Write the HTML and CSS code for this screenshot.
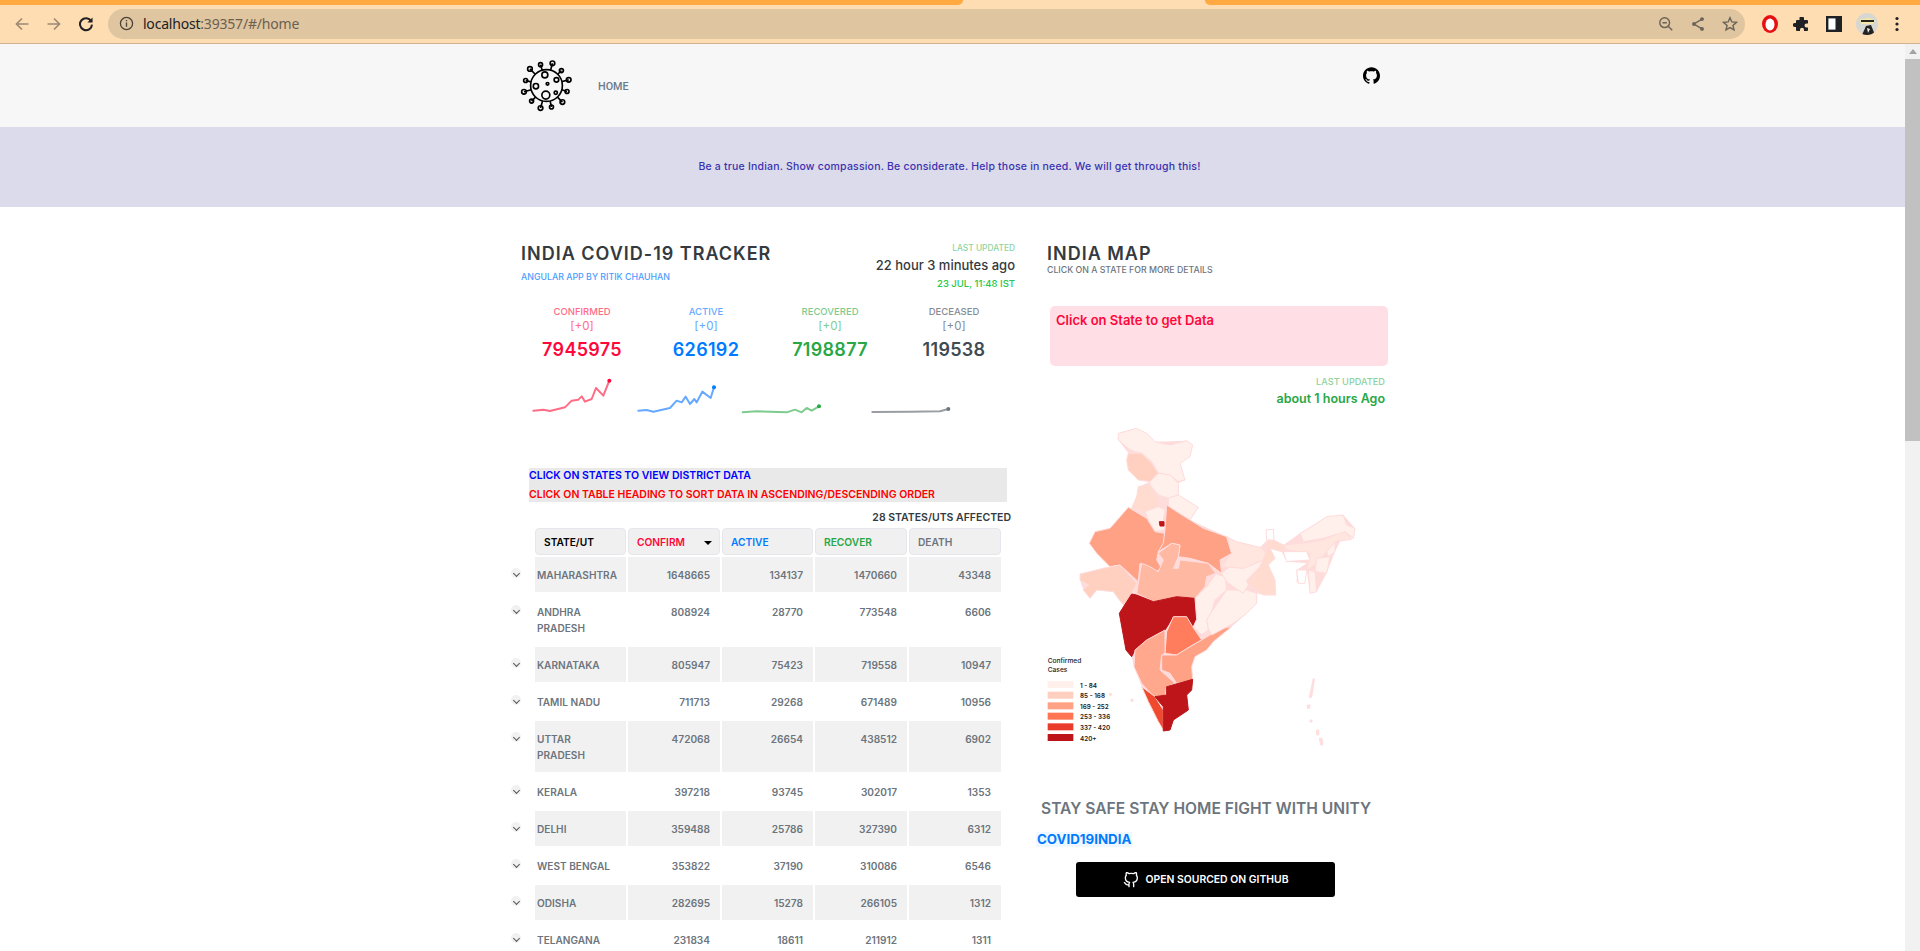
FILE: index.html
```html
<!DOCTYPE html>
<html lang="en">
<head>
<meta charset="utf-8">
<title>India COVID-19 Tracker</title>
<link rel="stylesheet" href="styles.css">
</head>
<body>
<div class="tabstrip"><span class="tab-seg tab-left"></span><span class="tab-gap"></span><span class="tab-seg tab-right"></span></div>
<header class="toolbar">
  <svg class="tb-icon dim" viewBox="0 0 16 16"><path d="M14.500 8H2.500M8 2.500 2.500 8 8 13.500"/></svg>
  <svg class="tb-icon dim" viewBox="0 0 16 16"><path d="M1.500 8h12M8 2.500 13.500 8 8 13.500"/></svg>
  <svg class="tb-icon dark" viewBox="0 0 16 16"><path d="M13.200 5.200A6 6 0 1 0 14 8.600"/><path class="solid" d="M14.600 1.400v5.200H9.400z"/></svg>
  <div class="omnibox">
    <svg class="om-info" viewBox="0 0 16 16"><circle cx="8" cy="8" r="6.500"/><path d="M8 7v4.500M8 4.300v1.400"/></svg>
    <span class="url"><span class="url-host">localhost</span>:39357/#/home</span>
    <svg class="om-icon" viewBox="0 0 18 18"><circle cx="7.500" cy="7.500" r="5.500"/><path d="M5 7.500h5M11.500 11.500 16 16"/></svg>
    <svg class="om-icon" viewBox="0 0 18 18"><path d="M13.500 3.500 4.500 9l9 5.500"/><circle class="solid" cx="13.500" cy="3.500" r="2.200"/><circle class="solid" cx="4.500" cy="9" r="2.200"/><circle class="solid" cx="13.500" cy="14.500" r="2.200"/></svg>
    <svg class="om-icon" viewBox="0 0 18 18"><path d="m9 2 2.100 4.700 5.100.5-3.900 3.400 1.200 5L9 13l-4.500 2.600 1.200-5-3.900-3.400 5.100-.5z"/></svg>
  </div>
  <div class="ext-group">
    <svg class="ext" viewBox="0 0 18 18"><ellipse cx="9" cy="9" rx="8" ry="9" fill="#e60f12"/><ellipse cx="9" cy="9.500" rx="4.500" ry="6" fill="#fff"/></svg>
    <svg class="ext" viewBox="0 0 18 18"><path fill="#202124" d="M7 2h3a1 1 0 0 1 1 1v2h3a1 1 0 0 1 1 1v2.500h-1.500a2 2 0 0 0 0 4H15V15a1 1 0 0 1-1 1h-3v-1.300a2 2 0 0 0-4 0V16H4a1 1 0 0 1-1-1v-3H1.800a2 2 0 0 1 0-4H3V6a1 1 0 0 1 1-1h2.500V3A1 1 0 0 1 7 2z"/></svg>
    <svg class="ext" viewBox="0 0 18 18"><rect x="2.200" y="2.200" width="13.600" height="13.600" fill="#fff" stroke="#202124" stroke-width="2.400"/><rect x="10.500" y="2" width="5.500" height="14" fill="#202124"/></svg>
    <svg class="avatar" viewBox="0 0 22 22"><defs><clipPath id="av"><circle cx="11" cy="11" r="11"/></clipPath></defs><g clip-path="url(#av)"><rect width="22" height="22" fill="#d6d6d2"/><path d="M4 6 14 5l5 3-2 3H5z" fill="#f2e6a8"/><rect x="5" y="7" width="13" height="2" fill="#26241f"/><path d="M6 22 10 13l5-1 4 10z" fill="#222"/><path d="m11 15 3 1-2 4z" fill="#eee"/></g></svg>
    <svg class="ext" viewBox="0 0 18 18"><circle cx="9" cy="3.500" r="1.600" fill="#202124"/><circle cx="9" cy="9" r="1.600" fill="#202124"/><circle cx="9" cy="14.500" r="1.600" fill="#202124"/></svg>
  </div>
</header>

<div class="viewport">
  <div class="page">
    <nav class="navbar">
      <div class="nav-inner">
        <svg class="logo" viewBox="30 25 160 160">
          <circle cx="110" cy="105" r="48"/>
          <path d="M76 71 60 55M97 59 92 42M122.500 58 128 38M144 71 155 60M157 93 177 88M156 118 172 123M143 140 158 155M121 152 125 170M98 151.500 92 173M77 140 65 152M64 118 42 124M63 94 47 90"/>
          <g class="logo-tips">
            <circle cx="60" cy="55" r="7"/><circle cx="92" cy="42" r="6"/><circle cx="128" cy="38" r="7"/><circle cx="155" cy="60" r="6"/><circle cx="177" cy="88" r="7"/><circle cx="172" cy="123" r="6"/><circle cx="158" cy="155" r="7"/><circle cx="125" cy="170" r="6"/><circle cx="92" cy="173" r="7"/><circle cx="65" cy="152" r="6"/><circle cx="42" cy="124" r="7"/><circle cx="47" cy="90" r="6"/>
            <circle cx="105" cy="73" r="9"/><circle cx="140" cy="88" r="7"/><circle cx="78" cy="107" r="8"/><circle cx="113" cy="100" r="4"/><circle cx="138" cy="127" r="5"/><circle cx="108" cy="134" r="12"/>
          </g>
        </svg>
        <a class="nav-link">HOME</a>
        <svg class="nav-gh" viewBox="0 0 24 24"><path d="M12 .297c-6.630 0-12 5.373-12 12 0 5.303 3.438 9.800 8.205 11.385.6.113.82-.258.82-.577 0-.285-.01-1.040-.015-2.040-3.338.724-4.042-1.610-4.042-1.610C4.422 18.070 3.633 17.700 3.633 17.700c-1.087-.744.084-.729.084-.729 1.205.084 1.838 1.236 1.838 1.236 1.070 1.835 2.809 1.305 3.495.998.108-.776.417-1.305.76-1.605-2.665-.3-5.466-1.332-5.466-5.930 0-1.310.465-2.380 1.235-3.220-.135-.303-.54-1.523.105-3.176 0 0 1.005-.322 3.300 1.230.96-.267 1.980-.399 3-.405 1.020.006 2.040.138 3 .405 2.280-1.552 3.285-1.230 3.285-1.230.645 1.653.24 2.873.12 3.176.765.84 1.230 1.910 1.230 3.220 0 4.610-2.805 5.625-5.475 5.920.42.36.81 1.096.81 2.220 0 1.606-.015 2.896-.015 3.286 0 .315.21.69.825.57C20.565 22.092 24 17.592 24 12.297c0-6.627-5.373-12-12-12"/></svg>
      </div>
    </nav>
    <div class="banner">Be a true Indian. Show compassion. Be considerate. Help those in need. We will get through this!</div>

    <main class="columns">
      <section class="left">
        <div class="head-row">
          <div>
            <h1 class="title">INDIA COVID-19 TRACKER</h1>
            <div class="byline">ANGULAR APP BY RITIK CHAUHAN</div>
          </div>
          <div class="updated">
            <div class="upd-label upd-small">LAST UPDATED</div>
            <div class="upd-ago">22 hour 3 minutes ago</div>
            <div class="upd-date">23 JUL, 11:48 IST</div>
          </div>
        </div>

        <div class="stats">
          <div class="stat confirmed"><div class="stat-label">CONFIRMED</div><div class="stat-delta">[+0]</div><div class="stat-num">7945975</div></div>
          <div class="stat active"><div class="stat-label">ACTIVE</div><div class="stat-delta">[+0]</div><div class="stat-num">626192</div></div>
          <div class="stat recovered"><div class="stat-label">RECOVERED</div><div class="stat-delta">[+0]</div><div class="stat-num">7198877</div></div>
          <div class="stat deceased"><div class="stat-label">DECEASED</div><div class="stat-delta">[+0]</div><div class="stat-num">119538</div></div>
        </div>

        <svg class="sparks" viewBox="0 450 1530 135">
          <polyline class="sp-red" points="70,560 100,557 120,561 165,550 185,530 205,527 215,517 225,533 245,525 258,492 280,515 298,470"/><circle class="dot-red" cx="298" cy="470" r="6"/>
          <polyline class="sp-blue" points="385,560 410,558 430,563 480,552 500,530 515,535 527,518 540,540 553,525 560,535 577,503 602,522 612,490"/><circle class="dot-blue" cx="612" cy="490" r="6"/>
          <polyline class="sp-green" points="698,565 740,562 830,565 855,557 875,565 890,552 905,560 927,547"/><circle class="dot-green" cx="927" cy="547" r="6"/>
          <polyline class="sp-grey" points="1087,564 1200,563 1290,562 1315,555"/><circle class="dot-grey" cx="1315" cy="555" r="6"/>
        </svg>

        <div class="notice">
          <div class="notice-blue">CLICK ON STATES TO VIEW DISTRICT DATA</div>
          <div class="notice-red">CLICK ON TABLE HEADING TO SORT DATA IN ASCENDING/DESCENDING ORDER</div>
        </div>
        <div class="affected">28 STATES/UTS AFFECTED</div>

        <table class="tbl">
          <colgroup><col class="c0"><col class="c1"><col class="c2"><col class="c3"><col class="c4"><col class="c5"></colgroup>
          <thead>
            <tr><th class="blank"></th><th class="h-state">STATE/UT</th><th class="h-conf">CONFIRM<span class="sort"></span></th><th class="h-act">ACTIVE</th><th class="h-rec">RECOVER</th><th class="h-dec">DEATH</th></tr>
          </thead>
          <tbody>
            <tr><td class="ch"><span class="chev"></span></td><td>MAHARASHTRA</td><td>1648665</td><td>134137</td><td>1470660</td><td>43348</td></tr>
            <tr><td class="ch"><span class="chev"></span></td><td>ANDHRA PRADESH</td><td>808924</td><td>28770</td><td>773548</td><td>6606</td></tr>
            <tr><td class="ch"><span class="chev"></span></td><td>KARNATAKA</td><td>805947</td><td>75423</td><td>719558</td><td>10947</td></tr>
            <tr><td class="ch"><span class="chev"></span></td><td>TAMIL NADU</td><td>711713</td><td>29268</td><td>671489</td><td>10956</td></tr>
            <tr><td class="ch"><span class="chev"></span></td><td>UTTAR PRADESH</td><td>472068</td><td>26654</td><td>438512</td><td>6902</td></tr>
            <tr><td class="ch"><span class="chev"></span></td><td>KERALA</td><td>397218</td><td>93745</td><td>302017</td><td>1353</td></tr>
            <tr><td class="ch"><span class="chev"></span></td><td>DELHI</td><td>359488</td><td>25786</td><td>327390</td><td>6312</td></tr>
            <tr><td class="ch"><span class="chev"></span></td><td>WEST BENGAL</td><td>353822</td><td>37190</td><td>310086</td><td>6546</td></tr>
            <tr><td class="ch"><span class="chev"></span></td><td>ODISHA</td><td>282695</td><td>15278</td><td>266105</td><td>1312</td></tr>
            <tr><td class="ch"><span class="chev"></span></td><td>TELANGANA</td><td>231834</td><td>18611</td><td>211912</td><td>1311</td></tr>
          </tbody>
        </table>
      </section>

      <section class="right">
        <h2 class="title">INDIA MAP</h2>
        <div class="map-sub">CLICK ON A STATE FOR MORE DETAILS</div>
        <div class="state-box">Click on State to get Data</div>
        <div class="map-updated">
          <div class="upd-label">LAST UPDATED</div>
          <div class="map-ago">about 1 hours Ago</div>
        </div>
        <svg class="map" viewBox="0 0 1080 990">
          <polygon class="silhouette" points="265,40 320,25 375,65 470,62 488,75 450,130 465,180 445,190 445,225 505,262 480,300 590,350 620,365 690,382 712,360 708,330 730,328 732,360 760,375 810,340 890,290 940,285 975,325 970,355 940,345 915,395 890,460 860,515 840,520 830,450 800,490 800,450 830,430 770,425 755,395 720,385 735,415 715,435 737,525 700,525 680,520 680,550 650,580 605,620 550,665 495,710 485,740 488,780 470,825 475,870 430,900 420,930 400,933 385,905 355,845 335,800 312,740 305,710 288,690 268,580 298,575 268,540 250,515 200,510 180,535 160,510 150,480 150,462 220,445 240,440 200,400 178,370 195,335 240,325 295,262 305,265 320,230 325,200 360,185 295,150 290,120 295,100 265,60"/>
          <g class="states">
            <polygon class="s1" points="265,40 320,25 350,40 375,65 420,75 470,62 488,75 480,110 450,130 465,180 445,185 420,165 385,160 365,125 335,100 300,90 265,60"/>
            <polygon class="s2" points="295,100 335,100 365,130 385,160 360,185 325,180 295,150 290,120"/>
            <polygon class="s1" points="360,185 385,160 420,165 445,190 445,225 415,235 385,225 360,195"/>
            <polygon class="s2b" points="325,200 360,195 385,235 385,260 345,275 305,265 320,230"/>
            <polygon class="s1" points="345,275 385,260 405,270 400,300 405,330 375,335 355,300"/>
            <polygon class="s1" points="415,235 445,225 505,262 480,300 440,275 415,260"/>
            <polygon class="s3" points="295,262 350,295 375,335 405,340 400,370 385,395 380,420 395,445 370,460 330,430 325,485 270,435 240,440 200,400 178,370 195,335 240,325"/>
            <polygon class="s3" points="410,255 440,275 480,300 520,325 590,350 605,400 570,420 575,460 535,430 480,415 445,410 450,375 425,370 385,395 400,370 405,330"/>
            <polygon class="s3b" points="325,490 335,430 360,440 385,455 400,420 385,400 425,370 450,375 445,410 430,445 445,445 450,420 535,430 557,460 530,470 525,500 495,535 440,530 370,545 320,520"/>
            <polygon class="s2" points="150,462 220,445 270,435 320,490 300,530 298,575 268,540 250,515 200,510 180,535 160,510 175,495 150,480"/>
            <polygon class="s6" points="388,305 402,305 402,318 390,318"/>
            <polygon class="s6" points="305,522 320,525 370,545 440,530 495,535 500,598 488,620 470,590 430,590 405,630 350,660 315,690 305,710 288,690 268,580"/>
            <polygon class="s4" points="430,590 470,590 488,620 515,660 480,680 440,705 405,700 410,635"/>
            <polygon class="s3" points="605,620 550,665 530,690 495,710 485,740 488,780 440,790 420,760 395,750 395,705 440,705 480,680 515,660 540,645 575,625"/>
            <polygon class="s3c" points="350,660 405,630 405,700 395,705 390,750 435,790 410,800 405,830 375,835 335,790 312,740 315,690"/>
            <polygon class="s5" points="335,800 375,830 400,870 400,930 385,905 355,845"/>
            <polygon class="s6" points="488,778 485,810 470,825 475,870 430,900 420,930 400,933 400,860 375,830 410,825 410,800"/>
            <polygon class="s1" points="558,462 585,470 590,510 555,540 545,575 530,600 535,630 515,645 490,620 500,598 495,535 530,500"/>
            <polygon class="s1" points="545,575 590,510 620,510 650,510 680,520 680,550 650,580 610,610 545,645 535,625 530,600"/>
            <polygon class="s1" points="575,460 600,440 640,445 700,420 690,440 650,480 655,495 640,520 610,500 590,485"/>
            <polygon class="s1b" points="590,350 620,365 690,382 710,400 700,420 640,445 575,440 605,400"/>
            <polygon class="s2b" points="712,360 730,360 760,375 755,395 720,385 735,415 715,435 735,480 737,525 700,525 650,485 690,440 705,405"/>
            <polygon class="s0" points="708,330 730,328 732,360 710,360"/>
            <polygon class="s1b" points="760,375 830,368 880,360 940,332 965,358 915,365 890,395 860,430 830,450 838,420 840,400 770,390"/>
            <polygon class="s1" points="810,340 860,310 890,290 940,285 950,315 975,325 970,355 945,335 880,355 820,365"/>
            <polygon class="s0" points="760,395 830,395 840,420 770,425"/>
            <polygon class="s1" points="860,415 900,410 890,460 855,455"/>
            <polygon class="s1" points="835,450 855,455 860,515 840,520"/>
            <polygon class="s0" points="800,450 830,450 825,490 805,490"/>
            <polygon class="s1" points="890,395 915,365 915,395 895,410"/>
            <polygon class="isl" points="850,775 853,778 845,832 838,832"/>
            <polygon class="isl" points="832,855 840,855 838,865 832,865"/>
            <polygon class="isl" points="840,900 846,900 846,906 840,906"/>
            <polygon class="isl" points="860,930 866,930 866,945 860,945"/>
            <polygon class="isl" points="868,955 876,955 878,975 872,975"/>
            <polygon class="isl" points="238,820 244,820 244,826 238,826"/>
            <polygon class="isl" points="303,838 309,838 309,844 303,844"/>
          </g>
          <text class="lg-title" x="53" y="728">Confirmed</text>
          <text class="lg-title" x="53" y="755">Cases</text>
          <rect class="l1" x="53" y="783" width="77" height="21"/><text class="lg-text" x="150" y="803">1 - 84</text>
          <rect class="l2" x="53" y="815" width="77" height="21"/><text class="lg-text" x="150" y="835">85 - 168</text>
          <rect class="l3" x="53" y="847" width="77" height="21"/><text class="lg-text" x="150" y="866">169 - 252</text>
          <rect class="l4" x="53" y="878" width="77" height="21"/><text class="lg-text" x="150" y="898">253 - 336</text>
          <rect class="l5" x="53" y="910" width="77" height="21"/><text class="lg-text" x="150" y="929">337 - 420</text>
          <rect class="l6" x="53" y="942" width="77" height="21"/><text class="lg-text" x="150" y="962">420+</text>
        </svg>
        <div class="stay">STAY SAFE STAY HOME FIGHT WITH UNITY</div>
        <div class="brand">COVID19INDIA</div>
        <a class="gh-btn">
          <svg class="gh-btn-icon" viewBox="0 0 24 24"><path d="M9 19c-5 1.500-5-2.500-7-3m14 6v-3.870a3.370 3.370 0 0 0-.94-2.610c3.140-.35 6.440-1.540 6.440-7A5.440 5.440 0 0 0 20 4.770 5.070 5.070 0 0 0 19.910 1S18.730.65 16 2.480a13.380 13.380 0 0 0-7 0C6.270.65 5.090 1 5.090 1A5.070 5.070 0 0 0 5 4.770a5.440 5.440 0 0 0-1.500 3.750c0 5.420 3.300 6.610 6.440 7A3.370 3.370 0 0 0 9 18.130V22"/></svg>
          <span>OPEN SOURCED ON GITHUB</span>
        </a>
      </section>
    </main>
  </div>
  <div class="scrollbar">
    <span class="sb-arrow"></span>
    <span class="sb-thumb"></span>
  </div>
</div>
</body>
</html>
```

FILE: styles.css
```css
* { box-sizing: border-box; }
html, body { margin: 0; height: 951px; overflow: hidden; }
body { font-family: Inter, "Liberation Sans", sans-serif; background: #fff; color: #343a40; }

/* browser chrome */
.tabstrip { display: flex; height: 5px; background: #ffddb3; }
.tab-seg { display: block; background: #ffa940; }
.tab-left { width: 963px; border-bottom-right-radius: 5px; }
.tab-gap { flex: 1; }
.tab-right { width: 715px; border-bottom-left-radius: 5px; }
.toolbar { display: flex; align-items: center; height: 39px; background: #ffddb3; border-bottom: 1px solid #d1b38f; padding: 0 0 1px 14px; }
.tb-icon { width: 16px; height: 16px; margin-right: 16px; fill: none; stroke-width: 1.700; }
.dim { stroke: #9c8a74; }
.dark { stroke: #202124; stroke-width: 2; }
.tb-icon .solid { fill: #202124; stroke: none; }
.omnibox { display: flex; align-items: center; width: 1639px; height: 30px; margin-left: -2px; background: #dfc5a0; border-radius: 15px; padding: 0 7px 0 11px; }
.om-info { width: 15px; height: 15px; fill: none; stroke: #4a4238; stroke-width: 1.400; margin-right: 9px; }
.url { flex: 1; font: 14px/1 "Noto Sans", sans-serif; letter-spacing: -.2px; color: #6b5f4f; }
.url-host { color: #202124; }
.om-icon { width: 16px; height: 16px; margin-left: 16px; fill: none; stroke: #6b6358; stroke-width: 1.600; }
.om-icon .solid { fill: #6b6358; stroke: none; }
.ext-group { display: flex; align-items: center; padding-left: 16px; }
.ext { width: 18px; height: 18px; margin-right: 14px; }
.avatar { width: 22px; height: 22px; margin-right: 10px; margin-left: -1px; }

/* page frame */
.viewport { display: flex; height: 907px; overflow: hidden; }
.page { flex: 1; min-width: 0; }
.scrollbar { width: 15px; background: #f1f1f1; display: flex; flex-direction: column; align-items: center; padding-top: 5px; }
.sb-arrow { width: 0; height: 0; border-left: 4px solid transparent; border-right: 4px solid transparent; border-bottom: 5px solid #a3a3a3; }
.sb-thumb { width: 15px; height: 382px; margin-top: 5px; background: #c1c1c1; }

.navbar { height: 83px; background: #f7f7f7; }
.nav-inner { position: relative; display: flex; align-items: flex-start; height: 100%; padding-left: 520px; }
.logo { width: 53px; height: 53px; margin-top: 15px; fill: none; stroke: #000; stroke-width: 5; }
.nav-link { margin: 36px 0 0 25px; font: 500 10.800px/13px Roboto, sans-serif; color: #6c7b8d; }
.nav-gh { position: absolute; left: 1363px; top: 23px; width: 17px; height: 17px; fill: #000; }
.banner { height: 80px; background: #dcdbeb; display: flex; align-items: center; justify-content: center; padding: 0 6px 1px 0; margin: 0; font-size: 10.500px; letter-spacing: .2px; font-weight: 500; color: #3a33b0; }

.columns { display: flex; padding-left: 506px; }
.left { width: 524px; padding-top: 35px; }
.right { width: 370px; padding: 35px 0 0 17px; position: relative; }

.title { margin: 0; font-size: 18px; line-height: 24px; font-weight: 600; letter-spacing: 1px; color: #343a40; }
.head-row { display: flex; justify-content: space-between; padding: 0 15px 0 15px; height: 63px; }
.byline { margin-top: 5px; font-size: 8.800px; line-height: 12px; font-weight: 500; color: #4c9dff; }
.updated { text-align: right; margin-top: 0; }
.upd-label { font-size: 9.200px; line-height: 13px; font-weight: 500; color: #8ed39e; }
.upd-small { font-size: 8.400px; }
.upd-ago { margin-top: 2px; font-size: 13px; line-height: 16px; font-weight: 500; color: #343a40; }
.upd-date { margin-top: 5px; font-size: 9.500px; line-height: 12px; font-weight: 500; color: #28c745; }

.stats { display: flex; padding-left: 14px; margin-top: 0; }
.stat { width: 124px; text-align: center; }
.stat-label { font-size: 9.500px; line-height: 13px; font-weight: 500; }
.stat-delta { font-size: 11.500px; line-height: 16px; font-weight: 400; }
.stat-num { margin-top: 4px; font-size: 18px; line-height: 24px; font-weight: 600; letter-spacing: .3px; }
.confirmed .stat-label, .confirmed .stat-delta { color: #ff6c85; }
.confirmed .stat-num { color: #ff073a; }
.active .stat-label, .active .stat-delta { color: #66a9ff; }
.active .stat-num { color: #007bff; }
.recovered .stat-label, .recovered .stat-delta { color: #7ecb8f; }
.recovered .stat-num { color: #28a745; }
.deceased .stat-label, .deceased .stat-delta { color: #858c93; }
.deceased .stat-num { color: #404a53; }

.sparks { display: block; width: 510px; height: 45px; margin: 12px 0 0 4px; }
.sparks polyline { fill: none; stroke-width: 6; stroke-linejoin: round; stroke-linecap: round; }
.sp-red { stroke: #ff6c85; }
.sp-blue { stroke: #66a9ff; }
.sp-green { stroke: #7ecb8f; }
.sp-grey { stroke: #9a9ea2; }
.dot-red { fill: #ff073a; }
.dot-blue { fill: #007bff; }
.dot-green { fill: #28a745; }
.dot-grey { fill: #6c757d; }

.notice { width: 478px; height: 34px; margin: 49px 0 0 23px; padding-top: 2px; background: #e9e9e9; font-size: 10.500px; font-weight: 600; line-height: 12px; }
.notice-blue { color: #0000ff; }
.notice-red { color: #ff0000; margin-top: 7px; }
.affected { margin: 9px 19px 0 0; font-size: 10.500px; line-height: 14px; font-weight: 600; text-align: right; color: #343a40; }

.tbl { border-collapse: separate; border-spacing: 2px; table-layout: fixed; width: 497px; margin-top: 1px; font-size: 10.100px; }
.c0 { width: 25px; }
.c1 { width: 91px; }
.c2 { width: 92px; }
.c3 { width: 91px; }
.c4 { width: 92px; }
.c5 { width: 92px; }
.tbl th { height: 27px; padding: 0 7px 0 8px; text-align: left; font-size: 10.200px; font-weight: 600; background: #f0f0f0; border: 1px solid #e6e6ec; border-radius: 4px; position: relative; }
.tbl th.blank { background: none; border: 0; }
.h-state { color: #000; }
.h-conf { color: #ff073a; }
.h-act { color: #007bff; }
.h-rec { color: #28a745; }
.h-dec { color: #6c757d; }
.sort { position: absolute; right: 7px; top: 12px; width: 0; height: 0; border-left: 4px solid transparent; border-right: 4px solid transparent; border-top: 4px solid #000; }
.tbl td { padding: 9.500px 10px 9.500px 2px; line-height: 16px; text-align: right; vertical-align: top; font-weight: 600; color: #6c757d; }
.tbl td:nth-child(2) { text-align: left; }
.tbl tbody tr:nth-child(odd) td { background: #f1f1f1; }
.tbl tbody tr td.ch { background: none !important; padding: 11px 0 0 3px; text-align: left; }
.chev { position: relative; display: block; width: 10px; height: 10px; background: #f1f1f1; border-radius: 50%; }
.chev::after { content: ""; position: absolute; left: 3px; top: 2.500px; width: 4px; height: 4px; border-right: 1px solid #555; border-bottom: 1px solid #555; transform: rotate(45deg); }

.map-sub { font-size: 8.750px; line-height: 12px; font-weight: 500; color: #6c757d; margin-top: -2px; }
.state-box { width: 338px; height: 60px; margin: 30px 0 0 3px; padding: 6px 6px; background: #ffdfe5; border-radius: 5px; color: #ff073a; font-size: 13px; line-height: 16px; font-weight: 600; }
.map-updated { text-align: right; padding-right: 2px; margin-top: 9px; width: 340px; }
.map-ago { margin-top: 2px; font-size: 12.500px; line-height: 17px; font-weight: 600; color: #28a745; }
.map { display: block; width: 360px; height: 330px; margin: 13px 0 0 -17px; }
.silhouette { fill: #ffdcdc; }
.states polygon { stroke: #ffdcdc; stroke-width: 3; stroke-linejoin: round; }
.s0 { fill: #fff; }
.s1 { fill: #fff0eb; }
.s1b { fill: #ffe6de; }
.s2 { fill: #ffd0c0; }
.s2b { fill: #ffdccf; }
.s3 { fill: #ffa184; }
.s3b { fill: #ffb9a2; }
.s3c { fill: #ffa88e; }
.s4 { fill: #ff7d5c; }
.s5 { fill: #ef4a30; }
.states .s6 { fill: #bd1519; stroke: #bd1519; }
.isl { fill: #ffdfe5; }
.lg-title { font-size: 20px; font-weight: 500; fill: #222; }
.lg-text { font-size: 19px; font-weight: 600; fill: #222; }
.l1 { fill: #fff0eb; }
.l2 { fill: #ffd0c0; }
.l3 { fill: #ffa184; }
.l4 { fill: #ff7553; }
.l5 { fill: #ea3c2c; }
.l6 { fill: #bd1519; }

.stay { margin: 49px 0 0 -6px; font-size: 15.600px; line-height: 20px; font-weight: 600; color: #6c757d; white-space: nowrap; }
.brand { display: inline-block; margin: 13px 0 0 -11px; padding: 0 1px; background: #eff7ff; color: #007bff; font-size: 13.300px; line-height: 15px; font-weight: 700; }
.gh-btn { display: flex; align-items: center; justify-content: center; width: 259px; height: 35px; margin: 14px 0 0 29px; background: #000; border-radius: 3px; color: #fff; font-size: 10.400px; font-weight: 600; }
.gh-btn-icon { width: 16px; height: 16px; margin-right: 7px; fill: none; stroke: #fff; stroke-width: 2; stroke-linecap: round; stroke-linejoin: round; }
```
